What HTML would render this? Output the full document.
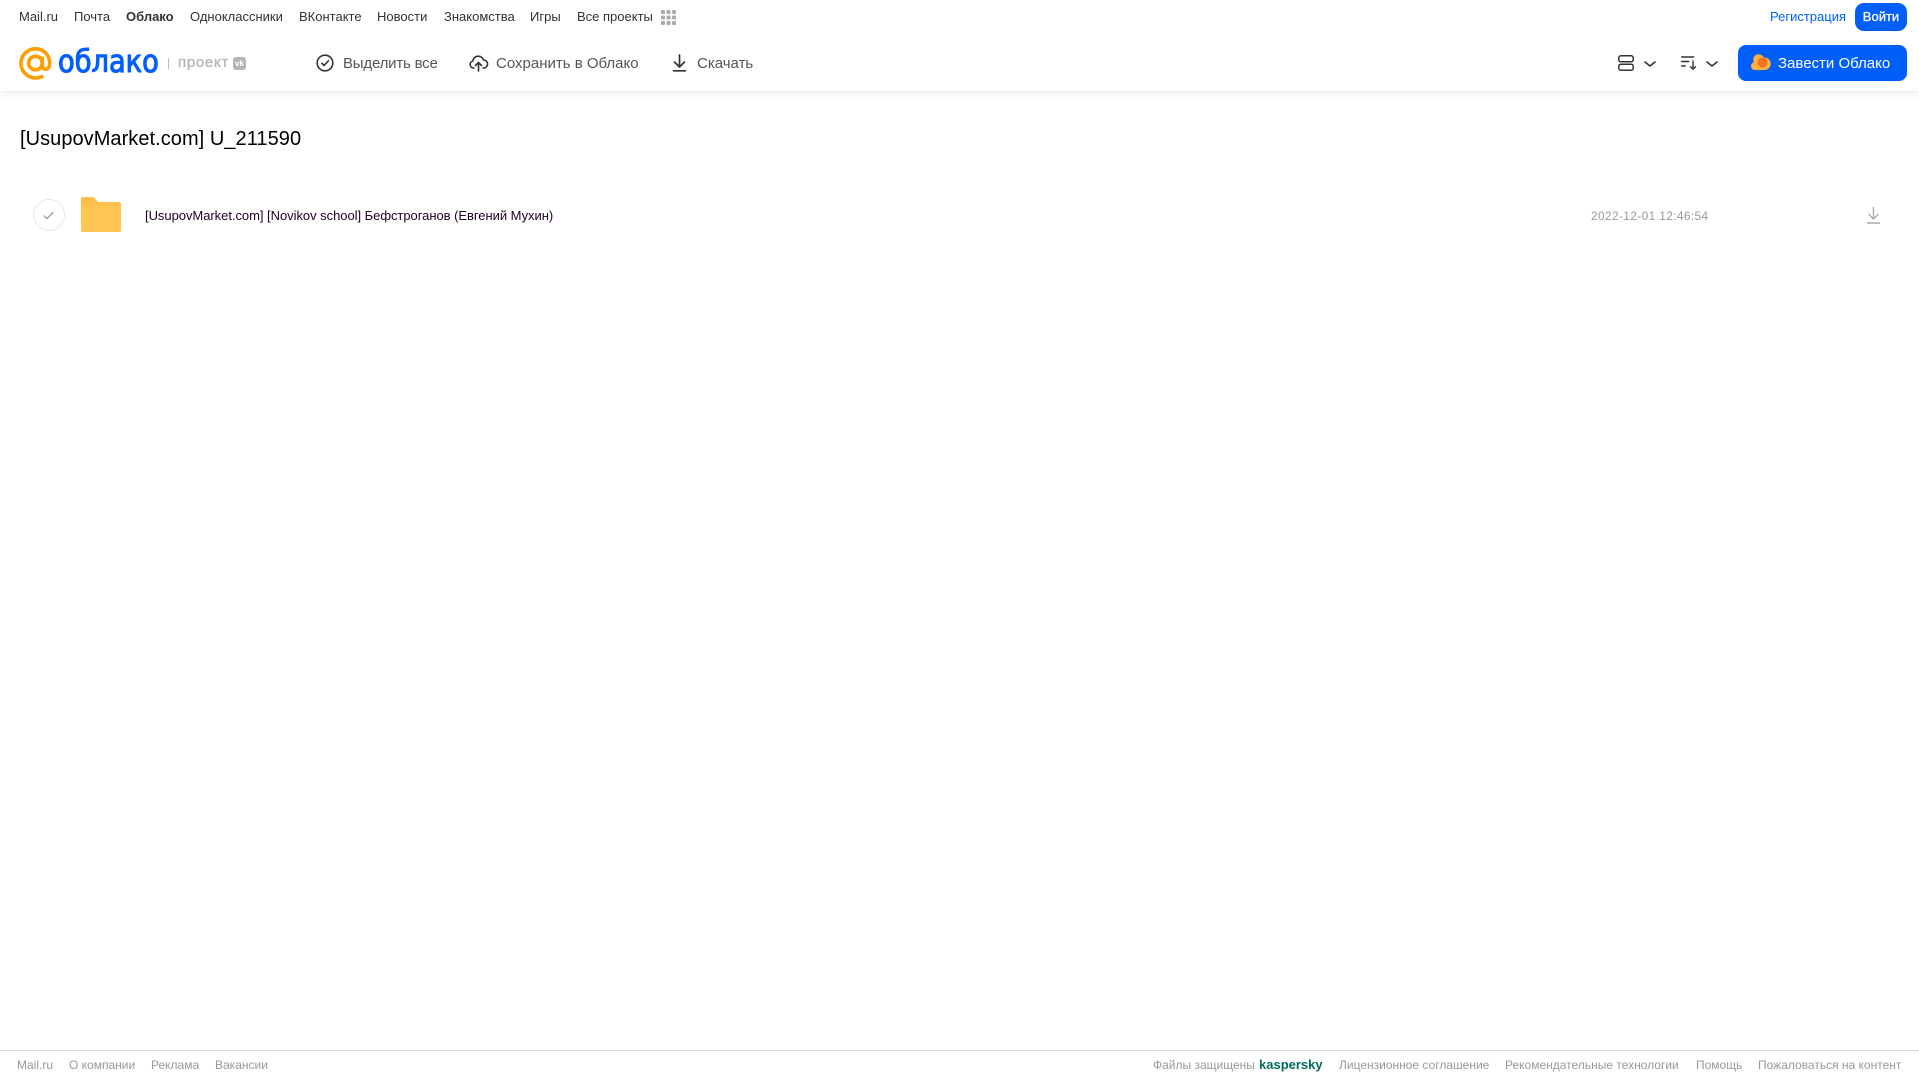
<!DOCTYPE html>
<html lang="ru"><head><meta charset="utf-8"><title>Облако</title>
<style>
html,body{margin:0;padding:0;background:#fff;width:1919px;height:1079px;overflow:hidden}
body{font-family:"Liberation Sans",sans-serif;position:relative}
.t{position:absolute;white-space:nowrap;line-height:20px}
.n{font-size:13px;top:7px;color:#333}
.b{font-size:15px;top:54px;color:#555;letter-spacing:-.1px}
.f{font-size:12px;top:1055px;color:#999}
svg{position:absolute;overflow:visible}
</style></head><body>
<div style="position:absolute;left:0;top:0;width:1919px;height:91px;box-shadow:0 2px 8px rgba(0,0,0,.09);background:#fff"></div>
<div class="t n" style="left:19px">Mail.ru</div>
<div class="t n" style="left:74px">Почта</div>
<div class="t n" style="left:126px;font-weight:bold">Облако</div>
<div class="t n" style="left:190px">Одноклассники</div>
<div class="t n" style="left:299px">ВКонтакте</div>
<div class="t n" style="left:377px">Новости</div>
<div class="t n" style="left:444px">Знакомства</div>
<div class="t n" style="left:530px">Игры</div>
<div class="t n" style="left:577px">Все проекты</div>
<svg style="left:661px;top:10px" width="15" height="15" fill="#aaa"><rect width="4" height="4" rx="1"/><rect x="5.500" width="4" height="4" rx="1"/><rect x="11" width="4" height="4" rx="1"/><rect y="5.500" width="4" height="4" rx="1"/><rect x="5.500" y="5.500" width="4" height="4" rx="1"/><rect x="11" y="5.500" width="4" height="4" rx="1"/><rect y="11" width="4" height="4" rx="1"/><rect x="5.500" y="11" width="4" height="4" rx="1"/><rect x="11" y="11" width="4" height="4" rx="1"/></svg>
<div class="t n" style="left:1770px;color:#005ff9">Регистрация</div>
<div style="position:absolute;left:1855px;top:3px;width:52px;height:28px;border-radius:9px;background:#005ff9;color:#fff;font-size:13px;line-height:27px;text-align:center;-webkit-text-stroke:.3px #fff">Войти</div>

<svg style="left:19px;top:47px" width="33" height="33" viewBox="0 0 33 33" fill="none" stroke="#ff9e00" stroke-width="3.600"><circle cx="16.500" cy="16" r="6.800"/><path d="M23.300 9.800v8.400c0 2.600 1.500 4 3.300 4 2.200 0 4.100-2 4.100-6.200C30.700 7.800 24.300 1.800 16.500 1.800 8.500 1.800 1.900 8.300 1.900 16.300s6.500 14.700 14.700 14.700c3 0 5.500-.8 7.600-2.200"/></svg>
<div class="t" style="left:58px;top:44px;font-size:31px;line-height:36px;color:#005ff9;-webkit-text-stroke:1.100px #005ff9;font-family:'DejaVu Sans','Liberation Sans',sans-serif;transform-origin:0 50%;transform:scaleX(.88)">облако</div>
<div style="position:absolute;left:168px;top:58px;width:1px;height:11px;background:#bbb"></div>
<div class="t" style="left:178px;top:53px;font-size:15px;color:#b4b4b4;letter-spacing:.7px;-webkit-text-stroke:.35px #b4b4b4">проект</div>
<div style="position:absolute;left:233px;top:57px;width:13px;height:13px;border-radius:3px;background:#b4b4b4;color:#fff;font-size:8px;font-weight:bold;line-height:13px;text-align:center">vk</div>

<svg style="left:316px;top:54px" width="18" height="18" viewBox="0 0 18 18" fill="none" stroke="#333" stroke-width="1.600" stroke-linecap="round" stroke-linejoin="round"><circle cx="9" cy="9" r="7.800"/><path d="M5.800 9.200l2.300 2.300 4.200-4.600"/></svg>
<div class="t b" style="left:343px;letter-spacing:-.2px">Выделить все</div>
<svg style="left:469px;top:54px" width="19" height="18" viewBox="0 0 19 18" fill="none" stroke="#333" stroke-width="1.600" stroke-linecap="round" stroke-linejoin="round"><path d="M5 14H4.500a3.500 3.500 0 0 1-.7-6.900A5.500 5.500 0 0 1 14.500 6a4 4 0 0 1 .2 8H14"/><path d="M9.500 17V9M6.500 11.500l3-3 3 3"/></svg>
<div class="t b" style="left:496px;letter-spacing:0">Сохранить в Облако</div>
<svg style="left:672px;top:54px" width="15" height="18" viewBox="0 0 15 18" fill="none" stroke="#333" stroke-width="1.700" stroke-linecap="round" stroke-linejoin="round"><path d="M7.500 1v11.500M2.500 8l5 5 5-5M1.500 16.800h12"/></svg>
<div class="t b" style="left:697px;letter-spacing:0">Скачать</div>

<svg style="left:1618px;top:55px" width="16" height="16" viewBox="0 0 16 16" fill="none" stroke="#333" stroke-width="1.500"><rect x=".8" y=".8" width="14.400" height="6" rx="2"/><rect x=".8" y="9.200" width="14.400" height="6" rx="2"/></svg>
<svg style="left:1644px;top:61px" width="12" height="6" viewBox="0 0 12 6" fill="none" stroke="#333" stroke-width="1.600" stroke-linecap="round" stroke-linejoin="round"><path d="M1 1l5 4 5-4"/></svg>
<svg style="left:1681px;top:56px" width="16" height="14" viewBox="0 0 16 14" fill="none" stroke="#333" stroke-width="1.400" stroke-linecap="round" stroke-linejoin="round"><path d="M.7 1h12M.7 5.500h7M.7 10h3.500M12 5v8M9.500 10.800l2.500 2.400 2.500-2.400"/></svg>
<svg style="left:1706px;top:61px" width="12" height="6" viewBox="0 0 12 6" fill="none" stroke="#333" stroke-width="1.600" stroke-linecap="round" stroke-linejoin="round"><path d="M1 1l5 4 5-4"/></svg>
<div style="position:absolute;left:1738px;top:45px;width:169px;height:36px;border-radius:8px;background:#005ff9"></div>
<svg style="left:1750px;top:53px" width="20" height="18" viewBox="0 0 20 18"><path d="M5 17a4 4 0 0 1-1.300-7.800A5.500 5.500 0 0 1 13.800 4.500a6 6 0 0 1 1.200 12.500z" fill="#ffb13d"/><circle cx="12.500" cy="9.500" r="5" fill="#f5721f"/></svg>
<div class="t b" style="left:1778px;color:#fff;letter-spacing:0">Завести Облако</div>

<div class="t" style="left:20px;top:127px;font-size:20px;line-height:24px;color:#000;letter-spacing:.05px">[UsupovMarket.com] U_211590</div>
<div style="position:absolute;left:33px;top:199px;width:30px;height:30px;border:1px solid #e8e8e8;border-radius:50%"></div>
<svg style="left:43px;top:211px" width="11" height="9" viewBox="0 0 11 9" fill="none" stroke="#999" stroke-width="1.300" stroke-linecap="round" stroke-linejoin="round"><path d="M1 4.800l2.900 2.900L10 1.300"/></svg>
<svg style="left:81px;top:197px" width="40" height="35" viewBox="0 0 40 35"><path d="M2 0h9c2 0 3 1 4 2.500L17 5h21a2 2 0 0 1 2 2v26a2 2 0 0 1-2 2H2a2 2 0 0 1-2-2V2a2 2 0 0 1 2-2z" fill="#ffbe4d"/><path d="M0 9h40v24a2 2 0 0 1-2 2H2a2 2 0 0 1-2-2z" fill="#ffc553"/></svg>
<div class="t" style="left:145px;top:206px;font-size:13px;color:#210028;letter-spacing:-.04px">[UsupovMarket.com] [Novikov school] Бефстроганов (Евгений Мухин)</div>
<div class="t" style="left:1591px;top:206px;font-size:12px;color:#999;letter-spacing:.32px">2022-12-01 12:46:54</div>
<svg style="left:1867px;top:207px" width="13" height="17" viewBox="0 0 13 17" fill="none" stroke="#aaa" stroke-width="1.400"><path d="M6.500 0v12M1.500 7l5 5 5-5M0 16h13"/></svg>

<div style="position:absolute;left:0;top:1050px;width:1919px;height:1px;background:#d8d8d8"></div>
<div class="t f" style="left:17px">Mail.ru</div>
<div class="t f" style="left:69px">О компании</div>
<div class="t f" style="left:151px">Реклама</div>
<div class="t f" style="left:215px">Вакансии</div>
<div class="t f" style="left:1153px">Файлы защищены</div>
<div class="t f" style="left:1259px;color:#006d5c;font-weight:bold;font-size:13px">kaspersky</div>
<div class="t f" style="left:1339px">Лицензионное соглашение</div>
<div class="t f" style="left:1505px">Рекомендательные технологии</div>
<div class="t f" style="left:1696px">Помощь</div>
<div class="t f" style="left:1758px">Пожаловаться на контент</div>
</body></html>
